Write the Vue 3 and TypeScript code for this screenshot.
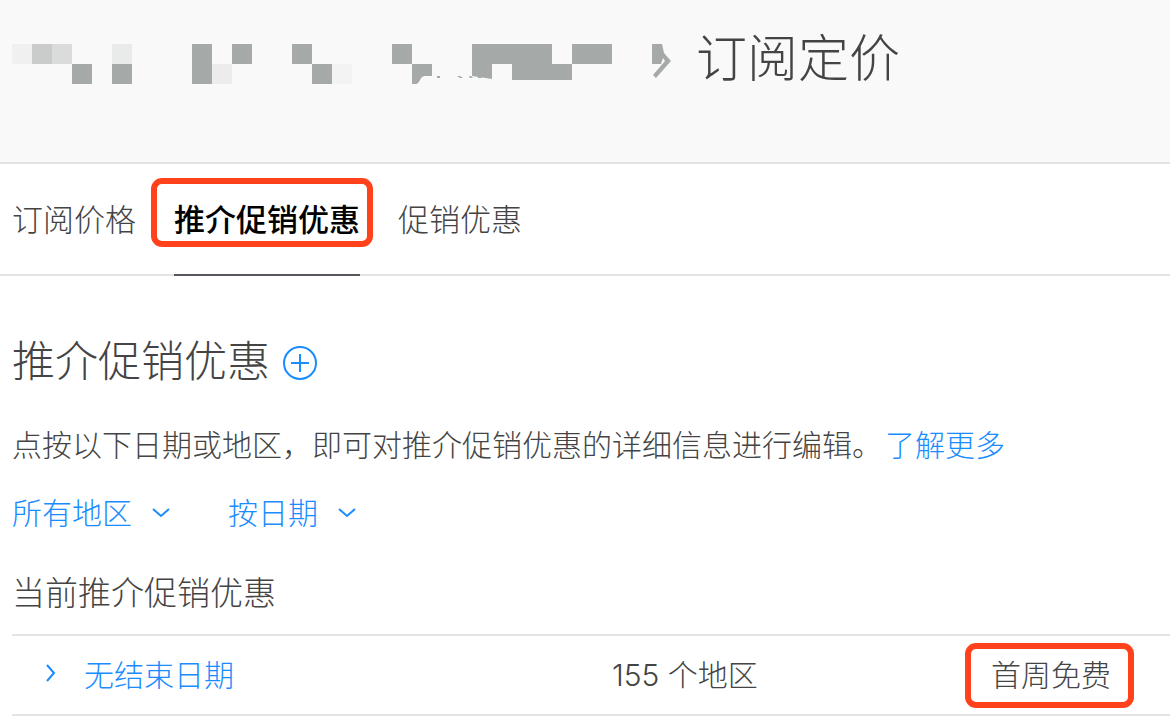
<script setup lang="ts">
import { ref } from 'vue'

interface Tab {
  id: string
  label: string
  marked: boolean
}

interface OfferRow {
  id: number
  date: string
  regions: string
  offer: string
}

const tabs: Tab[] = [
  { id: 'price', label: '订阅价格', marked: false },
  { id: 'intro', label: '推介促销优惠', marked: true },
  { id: 'promo', label: '促销优惠', marked: false },
]
const activeTab = ref('intro')

const region = ref('所有地区')
const order = ref('按日期')

const rows: OfferRow[] = [
  { id: 1, date: '无结束日期', regions: '155 个地区', offer: '首周免费' },
]
</script>

<template>
  <div class="page">
    <header class="header">
      <svg class="crumb" width="660" height="44" viewBox="12 42 660 44" aria-hidden="true">
        <g shape-rendering="crispEdges">
          <rect x="12" y="44" width="20" height="20" fill="#f0f0f0" />
          <rect x="32" y="44" width="20" height="20" fill="#cacccb" />
          <rect x="52" y="44" width="20" height="20" fill="#dadcdb" />
          <rect x="112" y="44" width="20" height="20" fill="#e9ebea" />
          <rect x="212" y="64" width="20" height="20" fill="#ececec" />
          <rect x="332" y="64" width="20" height="20" fill="#f3f3f3" />
          <g fill="#a5a9a7">
            <rect x="72" y="64" width="20" height="20" />
            <rect x="112" y="64" width="20" height="20" />
            <rect x="192" y="44" width="20" height="40" />
            <rect x="232" y="44" width="20" height="20" />
            <rect x="292" y="44" width="20" height="20" />
            <rect x="312" y="64" width="20" height="20" />
            <rect x="392" y="44" width="20" height="20" />
            <rect x="437" y="76" width="3" height="2" />
            <rect x="572" y="44" width="40" height="20" />
          </g>
        </g>
        <g fill="#a5a9a7">
          <path d="M412 64H432V76H424Q421 77 420 80Q418 84 416 84H412Z" />
          <path d="M457 76H460L463 78H460ZM469 76H471L473 78H470ZM478 76H483L481 78H478Z" />
          <path d="M472 44H552V64H572V80H512V64H492V79L472 76Z" />
          <path d="M652 44H662L664 53L671 61L656 78L653 75L665 61L663 58L661 64H652Z" />
        </g>
      </svg>
      <h1 class="title">订阅定价</h1>
    </header>

    <nav class="tabs">
      <button
        v-for="tab in tabs"
        :key="tab.id"
        type="button"
        class="tab"
        :class="{ active: activeTab === tab.id }"
        @click="activeTab = tab.id"
      >
        {{ tab.label }}
        <span v-if="tab.marked" class="mark"></span>
      </button>
    </nav>

    <main class="content">
      <div class="heading">
        <h2 class="section-title">推介促销优惠</h2>
        <button type="button" class="add" aria-label="添加">
          <svg width="34" height="34" viewBox="0 0 34 34" fill="none" stroke="currentColor" stroke-width="2">
            <circle cx="17" cy="17" r="16" />
            <path d="M8 17H26M17 8V26" />
          </svg>
        </button>
      </div>

      <p class="intro">点按以下日期或地区，即可对推介促销优惠的详细信息进行编辑。<a href="#more">了解更多</a></p>

      <div class="filters">
        <label class="filter">
          <select v-model="region" aria-label="地区">
            <option>所有地区</option>
          </select>
          <svg width="18" height="12" viewBox="0 0 18 12" fill="none" stroke="currentColor" stroke-width="2">
            <path d="M1 2L9 9L17 2" />
          </svg>
        </label>
        <label class="filter">
          <select v-model="order" aria-label="排序">
            <option>按日期</option>
          </select>
          <svg width="18" height="12" viewBox="0 0 18 12" fill="none" stroke="currentColor" stroke-width="2">
            <path d="M1 2L9 9L17 2" />
          </svg>
        </label>
      </div>

      <h3 class="table-title">当前推介促销优惠</h3>
      <table class="offers">
        <tbody>
          <tr v-for="row in rows" :key="row.id">
            <td class="date">
              <button type="button" class="expand">
                <svg width="12" height="18" viewBox="0 0 12 18" fill="none" stroke="currentColor" stroke-width="2">
                  <path d="M2 1L9 9L2 17" />
                </svg>
                {{ row.date }}
              </button>
            </td>
            <td class="regions">{{ row.regions }}</td>
            <td class="offer">
              <span class="offer-text">{{ row.offer }}<span class="mark"></span></span>
            </td>
          </tr>
        </tbody>
      </table>
    </main>
  </div>
</template>

<style>
body {
  margin: 0;
  background: #fff;
}
</style>

<style scoped>
.page {
  font-family: 'Noto Sans CJK SC', sans-serif;
  font-size: 30px;
  font-weight: 300;
  line-height: 44px;
  color: #444;
}

button,
select {
  margin: 0;
  padding: 0;
  border: 0;
  background: none;
  font: inherit;
  color: inherit;
  cursor: pointer;
}

h1,
h2,
h3,
p {
  margin: 0;
  font-weight: 300;
}

svg {
  display: block;
  flex: none;
}

.header {
  display: flex;
  align-items: flex-start;
  gap: 24px;
  padding: 17px 12px 69px;
  background: #f9f9f9;
  border-bottom: 2px solid #e3e3e3;
}

.crumb {
  margin-top: 25px;
}

.title {
  font-size: 51px;
  line-height: 76px;
  white-space: nowrap;
}

.tabs {
  display: flex;
  gap: 38px;
  padding: 0 12px;
  border-bottom: 2px solid #e3e3e3;
}

.tab {
  position: relative;
  margin-bottom: -2px;
  padding: 32px 0 34px;
  border-bottom: 2px solid transparent;
  font-size: 31px;
  white-space: nowrap;
}

.tab.active {
  font-weight: 500;
  color: #000;
  border-bottom-color: #55585f;
}

.mark {
  position: absolute;
  border: 6px solid #ff421c;
  border-radius: 11px;
  pointer-events: none;
}

.tab .mark {
  inset: 14px -13px 27px -23px;
}

.content {
  padding: 50px 0 0 12px;
}

.heading {
  display: flex;
  align-items: center;
  gap: 13px;
}

.section-title {
  font-size: 43px;
  line-height: 64px;
}

.add {
  margin-top: 10px;
  color: #1a8cff;
}

.intro {
  margin-top: 31px;
}

.intro a {
  margin-left: 3px;
  color: #1a8cff;
  text-decoration: none;
}

.filters {
  display: flex;
  gap: 58px;
  margin-top: 24px;
  color: #1a8cff;
}

.filter {
  display: flex;
  align-items: center;
  gap: 20px;
}

.filter select {
  appearance: none;
  height: 44px;
}

.filter svg {
  margin-top: 4px;
}

.table-title {
  margin-top: 34px;
  font-size: 33px;
  line-height: 48px;
}

.offers {
  width: 100%;
  margin-top: 19px;
  border-collapse: collapse;
  table-layout: fixed;
}

.offers td {
  height: 74px;
  padding: 0 0 4px;
  border-top: 2px solid #e3e3e3;
  border-bottom: 2px solid #e3e3e3;
}

.offers .date {
  width: 600px;
}

.offers .regions {
  padding-bottom: 0;
  font-family: Inter, 'Noto Sans CJK SC', sans-serif;
}

.expand {
  display: flex;
  align-items: center;
  gap: 27px;
  padding-left: 33px;
  color: #1a8cff;
}

.offers .offer {
  padding-right: 59px;
  text-align: right;
}

.offer-text {
  position: relative;
  display: inline-block;
}

.offer-text .mark {
  inset: -8px -23px -13px -26px;
}
</style>
